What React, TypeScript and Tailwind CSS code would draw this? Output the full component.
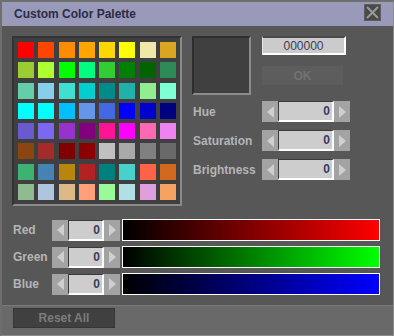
import React from "react";

const SWATCHES = [
  ["#ff0000", "#ff4500", "#ff8c00", "#ffa500", "#ffd700", "#ffff00", "#eee8aa", "#daa520"],
  ["#9acd32", "#adff2f", "#00ff00", "#00ff7f", "#32cd32", "#008000", "#006400", "#2e8b57"],
  ["#66cdaa", "#87ceeb", "#40e0d0", "#00ced1", "#008b8b", "#20b2aa", "#90ee90", "#7fffd4"],
  ["#00ffff", "#00ffff", "#00bfff", "#6495ed", "#4169e1", "#0000ff", "#0000cd", "#000080"],
  ["#6a5acd", "#7b68ee", "#9932cc", "#800080", "#ff1493", "#ff00ff", "#ff69b4", "#ee82ee"],
  ["#8b4513", "#a52a2a", "#800000", "#8b0000", "#c0c0c0", "#a9a9a9", "#808080", "#696969"],
  ["#3cb371", "#4682b4", "#b8860b", "#b22222", "#008080", "#48d1cc", "#ff6347", "#d2691e"],
  ["#8fbc8f", "#b0c4de", "#deb887", "#ffa07a", "#98fb98", "#b0e0e6", "#dda0dd", "#f4a460"],
];

const Arrow = ({ dir }: { dir: "left" | "right" }) => (
  <div className="w-[16px] h-full bg-[#a3a3a3] flex items-center justify-center">
    <svg width="7" height="12" viewBox="0 0 7 12">
      <polygon
        points={dir === "left" ? "7,0 7,12 0,6" : "0,0 0,12 7,6"}
        fill="#cfcfcf"
      />
    </svg>
  </div>
);

const Spinner = ({ inputWidth }: { inputWidth: string }) => (
  <div className="flex h-[21px]">
    <Arrow dir="left" />
    <div
      className={`${inputWidth} h-full bg-[#cdcdcd] border-t border-l border-[#3a3a3a] border-b-2 border-r-2 border-b-white border-r-white flex items-center justify-end pr-[2px] text-[12px] font-bold text-[#3c3c5a]`}
    >
      0
    </div>
    <Arrow dir="right" />
  </div>
);

const ChannelRow = ({ label, to }: { label: string; to: string }) => (
  <div className="flex items-center h-[22px]">
    <span className="w-[39px] text-[12px] font-bold text-[#b4b4b8]">{label}</span>
    <Spinner inputWidth="w-[36px]" />
    <div
      className="ml-[2px] w-[258px] h-[22px] border border-white"
      style={{ background: `linear-gradient(to right, #000000, ${to})` }}
    />
  </div>
);

const App = () => {
  return (
    <div
      className="w-[394px] h-[336px] bg-[#575757] border-t-2 border-l-2 border-[#6e6e6e] border-r border-b border-r-[#8a8a8a] border-b-[#8a8a8a] flex flex-col"
      style={{ fontFamily: '"Liberation Sans", Arial, sans-serif' }}
    >
      {/* title bar */}
      <div className="h-[24px] bg-[#9999b9] flex items-start justify-between pl-[12px] pr-[12px]">
        <span className="mt-[5px] text-[12px] font-bold text-[#2c2c44] leading-[14px]">
          Custom Color Palette
        </span>
        <div className="mt-[2px] w-[17px] h-[17px] bg-[#4a4a4a] border border-[#5e5e5e] flex items-center justify-center">
          <svg width="15" height="15" viewBox="0 0 15 15">
            <path d="M2 2 L13 13 M13 2 L2 13" stroke="#9a9a9a" strokeWidth="2" />
          </svg>
        </div>
      </div>

      {/* body */}
      <div className="flex-1 pl-[10px] pt-[10px]">
        <div className="flex">
          <div className="w-[170px] h-[170px] bg-[#3f3f3f] border-2 border-t-[#333333] border-l-[#333333] border-b-[#8a8a8a] border-r-[#8a8a8a] p-[4px] grid grid-cols-8 gap-[4px]">
            {SWATCHES.flat().map((c, i) => (
              <div key={i} className="w-[16px] h-[16px]" style={{ backgroundColor: c }} />
            ))}
          </div>

          <div className="ml-[10px] flex flex-col">
            <div className="flex">
              <div className="w-[59px] h-[59px] bg-[#404040] border-2 border-t-[#2e2e2e] border-l-[#2e2e2e] border-b-[#8c8c8c] border-r-[#8c8c8c]" />
              <div className="ml-[11px] flex flex-col">
                <div className="w-[84px] h-[19px] bg-[#cbcbcb] border-t-2 border-t-[#4a4a4a] border-l border-l-[#e6e6e6] border-r-2 border-r-white border-b-2 border-b-white flex items-center justify-center text-[12px] text-[#3c3c5a]">
                  000000
                </div>
                <div className="mt-[11px] w-[81px] h-[19px] bg-[#5d5d5d] flex items-center justify-center text-[12px] font-bold text-[#727272]">
                  OK
                </div>
              </div>
            </div>

            <div className="mt-[6px] flex flex-col gap-[8px] pl-[1px]">
              {["Hue", "Saturation", "Brightness"].map((l) => (
                <div key={l} className="flex items-center">
                  <span className="w-[69px] text-[12px] font-bold text-[#b4b4b8]">{l}</span>
                  <Spinner inputWidth="w-[56px]" />
                </div>
              ))}
            </div>
          </div>
        </div>

        <div className="mt-[13px] flex flex-col gap-[5px] pl-[1px]">
          <ChannelRow label="Red" to="#ff0000" />
          <ChannelRow label="Green" to="#00ff00" />
          <ChannelRow label="Blue" to="#0000ff" />
        </div>
      </div>

      {/* footer */}
      <div className="h-[30px] bg-[#696969] border-t border-[#7a7a7a] pl-[11px] pt-[2px]">
        <div className="w-[102px] h-[20px] bg-[#404040] border border-[#363636] flex items-center justify-center text-[12px] font-bold text-[#7c7c7c]">
          Reset All
        </div>
      </div>
    </div>
  );
};

export default App;
